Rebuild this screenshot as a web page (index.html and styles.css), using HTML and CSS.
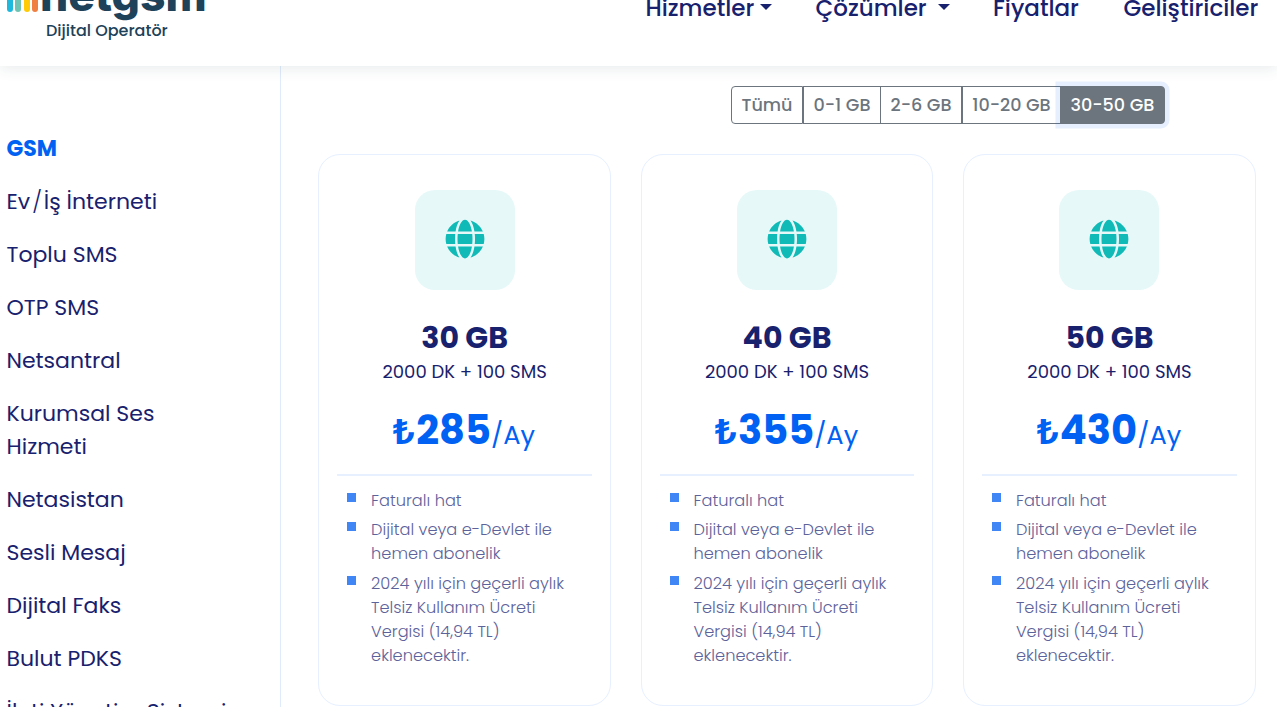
FILE: index.html
```
<!DOCTYPE html>
<html lang="tr">
<head>
<meta charset="utf-8">
<title>Netgsm</title>
<link rel="stylesheet" href="styles.css">
</head>
<body>
<svg class="defs" aria-hidden="true">
  <symbol id="globe" viewBox="0 0 496 512">
    <path fill="#0fbab7" d="M336.500 160C322 70.700 287.800 8 248 8s-74 62.700-88.500 152h177zM152 256c0 22.200 1.200 43.500 3.300 64h185.300c2.100-20.500 3.300-41.800 3.300-64s-1.200-43.500-3.300-64H155.300c-2.100 20.500-3.300 41.800-3.300 64zm324.700-96c-28.600-67.900-86.500-120.400-158-141.600 24.400 33.800 41.200 84.700 50 141.600h108zM177.200 18.400C105.800 39.600 47.800 92.100 19.300 160h108c8.700-56.900 25.500-107.800 49.900-141.600zM487.400 192H372.700c2.100 21 3.300 42.500 3.300 64s-1.200 43-3.300 64h114.600c5.500-20.500 8.600-41.800 8.600-64s-3.100-43.500-8.500-64zM120 256c0-21.500 1.200-43 3.300-64H8.600C3.200 212.500 0 233.800 0 256s3.200 43.500 8.600 64h114.600c-2-21-3.200-42.500-3.200-64zm39.500 96c14.500 89.300 48.700 152 88.500 152s74-62.700 88.500-152h-177zm159.300 141.600c71.400-21.200 129.400-73.700 158-141.600h-108c-8.800 56.900-25.600 107.800-50 141.600zM19.300 352c28.600 67.900 86.500 120.400 158 141.600-24.400-33.800-41.200-84.700-50-141.600h-108z"/>
  </symbol>
</svg>
<header class="header">
  <div class="brand">
    <div class="brand-row">
      <span class="bars"><i class="b1"></i><i class="b2"></i><i class="b3"></i><i class="b4"></i></span>
      <span class="wordmark">netgsm</span>
    </div>
    <div class="tagline">Dijital Operatör</div>
  </div>
  <nav class="nav">
    <a class="n1">Hizmetler<b class="caret"></b></a>
    <a class="n2">Çözümler<b class="caret"></b></a>
    <a class="n3">Fiyatlar</a>
    <a class="n4">Geliştiriciler</a>
  </nav>
</header>
<div class="layout">
  <aside class="sidebar">
    <a class="active">GSM</a>
    <a>Ev<span class="slash">/</span>İş İnterneti</a>
    <a>Toplu SMS</a>
    <a>OTP SMS</a>
    <a>Netsantral</a>
    <a>Kurumsal Ses<br>Hizmeti</a>
    <a>Netasistan</a>
    <a>Sesli Mesaj</a>
    <a>Dijital Faks</a>
    <a>Bulut PDKS</a>
    <a>İleti Yönetim Sistemi</a>
  </aside>
  <main class="main">
    <div class="filters">
      <button class="f1">Tümü</button><button class="f2">0-1 GB</button><button class="f3">2-6 GB</button><button class="f4">10-20 GB</button><button class="f5">30-50 GB</button>
    </div>
    <div class="cards">
      <section class="card">
        <div class="icon"><svg><use href="#globe"/></svg></div>
        <h2>30 GB</h2>
        <p class="sub">2000 DK + 100 SMS</p>
        <div class="price"><span class="lira">₺</span><span class="amount">285</span><span class="per">/Ay</span></div>
        <ul>
          <li>Faturalı hat</li>
          <li>Dijital veya e-Devlet ile hemen abonelik</li>
          <li>2024 yılı için geçerli aylık Telsiz Kullanım Ücreti Vergisi (14,94 TL) eklenecektir.</li>
        </ul>
      </section>
      <section class="card">
        <div class="icon"><svg><use href="#globe"/></svg></div>
        <h2>40 GB</h2>
        <p class="sub">2000 DK + 100 SMS</p>
        <div class="price"><span class="lira">₺</span><span class="amount">355</span><span class="per">/Ay</span></div>
        <ul>
          <li>Faturalı hat</li>
          <li>Dijital veya e-Devlet ile hemen abonelik</li>
          <li>2024 yılı için geçerli aylık Telsiz Kullanım Ücreti Vergisi (14,94 TL) eklenecektir.</li>
        </ul>
      </section>
      <section class="card">
        <div class="icon"><svg><use href="#globe"/></svg></div>
        <h2>50 GB</h2>
        <p class="sub">2000 DK + 100 SMS</p>
        <div class="price"><span class="lira">₺</span><span class="amount">430</span><span class="per">/Ay</span></div>
        <ul>
          <li>Faturalı hat</li>
          <li>Dijital veya e-Devlet ile hemen abonelik</li>
          <li>2024 yılı için geçerli aylık Telsiz Kullanım Ücreti Vergisi (14,94 TL) eklenecektir.</li>
        </ul>
      </section>
    </div>
  </main>
</div>
</body>
</html>
```
FILE: styles.css
```
* { box-sizing: border-box; }
body {
  margin: 0;
  width: 1277px;
  height: 707px;
  overflow: hidden;
  background: #fff;
  color: #18216d;
  font-family: Poppins, Inter, "Open Sans", sans-serif;
  display: flex;
  flex-direction: column;
}
.defs { display: none; }

/* Header */
.header {
  flex: none;
  height: 66px;
  display: flex;
  justify-content: space-between;
  background: #fff;
  box-shadow: 0 2px 14px rgba(31, 60, 75, .11);
  position: relative;
  z-index: 2;
}
.brand { margin-top: -34px; padding-left: 7px; color: #1d4259; }
.brand-row { display: flex; height: 54px; align-items: flex-start; }
.bars { display: flex; gap: 2.300px; margin-top: 16px; width: 33px; }
.bars i { flex: none; width: 6px; height: 30px; border-radius: 3px; }
.b1 { background: #1fb9dd; }
.b2 { background: #6fc3b3; }
.b3 { background: #ffcb05; }
.b4 { background: #f07f42; }
.wordmark { font-family: Inter, sans-serif; font-size: 44.500px; line-height: 58px; font-weight: 800; }
.tagline { padding-left: 39px; font-size: 16px; line-height: 21px; font-weight: 500; }
.nav { display: flex; width: 631.500px; margin-top: -10px; font-size: 23px; font-weight: 500; line-height: 36px; white-space: nowrap; }
.nav a { display: flex; align-items: center; height: 36px; }
.n1 { width: 170px; }
.n2 { width: 177.500px; }
.n3 { width: 130.500px; }
.caret { margin-left: 6px; margin-top: -3px; border: 6px solid transparent; border-top: 6px solid #18216d; border-bottom: 0; }
.n2 .caret { margin-left: 11px; }

/* Page columns */
.layout { flex: 1; display: flex; min-height: 0; }
.sidebar {
  flex: none;
  width: 281px;
  padding: 66px 0 0 6.500px;
  border-right: 1px solid #dfeafa;
  display: flex;
  flex-direction: column;
  gap: 20px;
  font-size: 22px;
  line-height: 33px;
  white-space: nowrap;
}
.sidebar .active { color: #0061f2; font-weight: 700; }
.slash { font-weight: 300; margin: 0 2px; }

.main { flex: 1; padding: 20px 21.300px 0 37.400px; }

/* Filter buttons */
.filters { display: flex; height: 38px; margin-left: 412.600px; }
.filters button {
  margin: 0;
  padding: 0;
  border: 1px solid #6c757d;
  background: none;
  color: #6c757d;
  font: 500 17.600px/24px Poppins, Inter, sans-serif;
  white-space: nowrap;
}
.filters .f1 { width: 72px; border-radius: 4px 0 0 4px; }
.filters .f2 { width: 78px; }
.filters .f3 { width: 82px; margin-left: -1px; }
.filters .f4 { width: 99px; }
.filters .f5 {
  width: 105px;
  margin-left: -1px;
  border-radius: 0 4px 4px 0;
  background: #6c757d;
  color: #fff;
  box-shadow: 0 0 0 4.500px rgba(0, 97, 242, .1);
}

/* Plan cards */
.cards { display: grid; grid-template-columns: repeat(3, 1fr); gap: 30px; margin-top: 30px; }
.card {
  height: 552px;
  padding: 35px 18px 0;
  border: 1px solid #e6f0ff;
  border-radius: 22px;
  display: flex;
  flex-direction: column;
  align-items: center;
}
.icon {
  width: 100px;
  height: 100px;
  border-radius: 20px;
  background: #e6f8f8;
  display: grid;
  place-items: center;
}
.icon svg { width: 40px; height: 40px; margin-top: -2px; }
.card h2 { margin: 30px 0 0; font-size: 30px; line-height: 36px; font-weight: 700; }
.sub { margin: 3px 0 0; font-size: 18px; line-height: 26px; }
.price {
  align-self: stretch;
  height: 91px;
  padding: 17px 2px 0 0;
  border-bottom: 2px solid #e6f0ff;
  display: flex;
  justify-content: center;
  align-items: baseline;
  color: #0061f2;
  line-height: 56px;
}
.lira { font-family: Inter, sans-serif; font-size: 34px; font-weight: 600; width: 24px; transform: scaleX(1.16); transform-origin: 20% 50%; }
.amount { font-size: 40px; font-weight: 700; }
.per { font-size: 25.700px; }
.card ul {
  align-self: stretch;
  list-style: none;
  margin: 12.600px 0 0;
  padding: 0 16px 0 9.700px;
  display: flex;
  flex-direction: column;
  gap: 5.500px;
  font-size: 16.200px;
  line-height: 24px;
  font-weight: 300;
  color: #5c629a;
}
.card li { display: grid; grid-template-columns: 24px 1fr; }
.card li::before { content: ""; width: 9px; height: 9px; margin-top: 4.300px; background: #4086f4; }
```
